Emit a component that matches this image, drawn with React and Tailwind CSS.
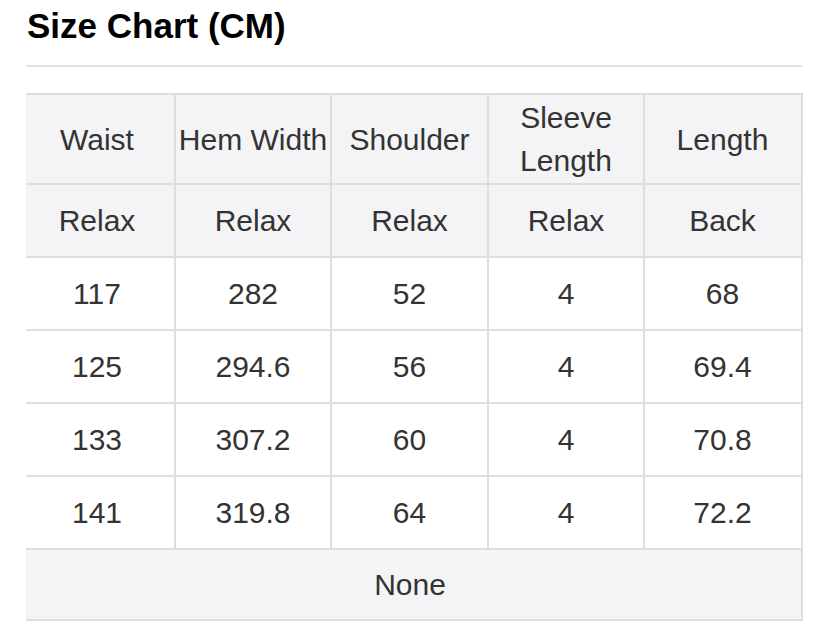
const header = ['Waist', 'Hem Width', 'Shoulder', 'Sleeve Length', 'Length'];
const sub = ['Relax', 'Relax', 'Relax', 'Relax', 'Back'];
const rows = [
  ['117', '282', '52', '4', '68'],
  ['125', '294.6', '56', '4', '69.4'],
  ['133', '307.2', '60', '4', '70.8'],
  ['141', '319.8', '64', '4', '72.2'],
];

// first column is cut on the left in the original, so its text sits a little left of centre
const cellCls = (i) =>
  `flex items-center justify-center text-center ${i < 4 ? 'border-r-2 border-[#dedede]' : ''} ${i === 0 ? 'pr-[6px]' : ''}`;

export default function App() {
  return (
    <div className="w-[825px] h-[631px] bg-white text-[#333] font-['Liberation_Sans',Arial,sans-serif] overflow-hidden">
      <h1 className="pl-[27px] pt-[6px] text-[35px] leading-[40px] font-bold text-black">Size Chart (CM)</h1>
      <div className="ml-[26px] mr-[23px] mt-[19px] h-[2px] bg-[#e2e2e2]" />
      <div className="ml-[26px] mr-[22px] mt-[26px] border-t-2 border-r-2 border-[#dedede] text-[30px] leading-[43px]">
        <div className="grid grid-cols-[150px_156px_157px_156px_155px] h-[90px] bg-[#f4f4f6] border-b-2 border-[#dedede]">
          {header.map((h, i) => (
            <div key={i} className={cellCls(i)}>
              {h === 'Sleeve Length' ? <span>Sleeve<br />Length</span> : h}
            </div>
          ))}
        </div>
        <div className="grid grid-cols-[150px_156px_157px_156px_155px] h-[73px] bg-[#f4f4f6] border-b-2 border-[#dedede]">
          {sub.map((h, i) => (
            <div key={i} className={cellCls(i)}>
              {h}
            </div>
          ))}
        </div>
        {rows.map((r, ri) => (
          <div key={ri} className="grid grid-cols-[150px_156px_157px_156px_155px] h-[73px] bg-white border-b-2 border-[#dedede]">
            {r.map((c, i) => (
              <div key={i} className={cellCls(i)}>
                {c}
              </div>
            ))}
          </div>
        ))}
        <div className="h-[71px] pr-[7px] flex items-center justify-center bg-[#f4f4f6] border-b-2 border-[#dedede]">None</div>
      </div>
    </div>
  );
}
